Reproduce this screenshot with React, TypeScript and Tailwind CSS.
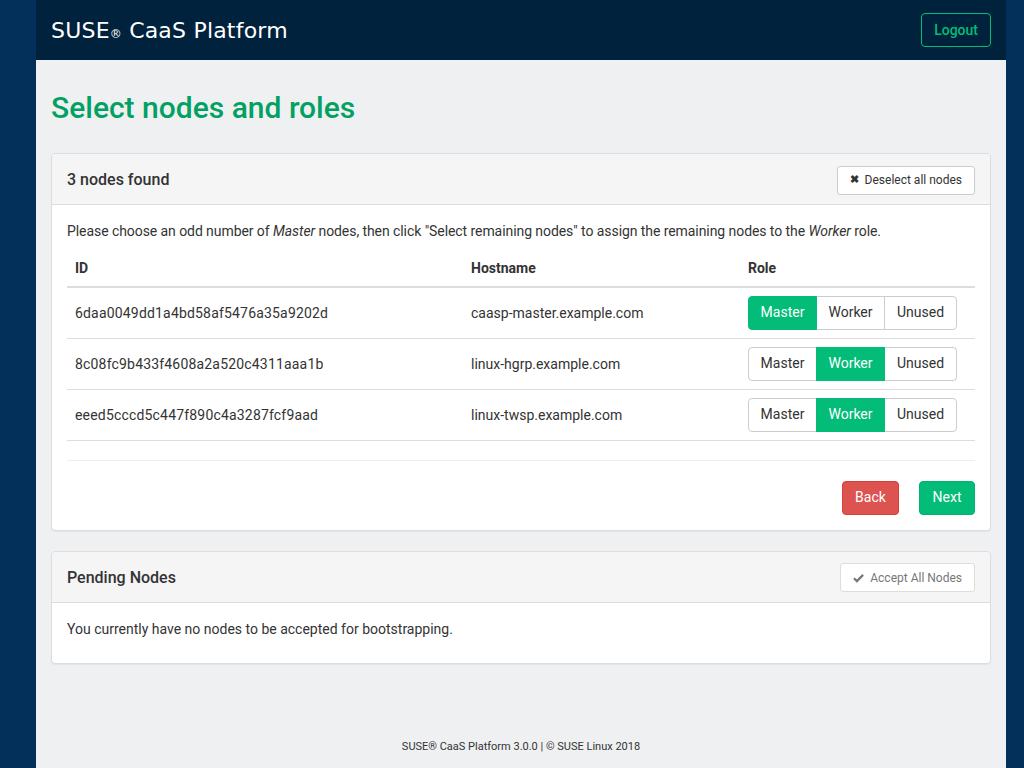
import React from "react";

const rows = [
  { id: "6daa0049dd1a4bd58af5476a35a9202d", host: "caasp-master.example.com", role: "Master" },
  { id: "8c08fc9b433f4608a2a520c4311aaa1b", host: "linux-hgrp.example.com", role: "Worker" },
  { id: "eeed5cccd5c447f890c4a3287fcf9aad", host: "linux-twsp.example.com", role: "Worker" },
];

function RoleGroup({ role }: { role: string }) {
  const opts = [
    { name: "Master", w: "w-[69px]" },
    { name: "Worker", w: "w-[69px]" },
    { name: "Unused", w: "w-[73px]" },
  ];
  return (
    <div className="flex h-[34px]">
      {opts.map((o, i) => {
        const active = o.name === role;
        const rounded = i === 0 ? "rounded-l-[4px]" : i === 2 ? "rounded-r-[4px]" : "";
        const border = i > 0 ? "-ml-px" : "";
        return (
          <div
            key={o.name}
            className={`${o.w} ${rounded} ${border} flex items-center justify-center border text-[14px] ${
              active
                ? "bg-[#02bc77] border-[#02bc77] text-white relative"
                : "bg-white border-[#ccc] text-[#333]"
            }`}
          >
            {o.name}
          </div>
        );
      })}
    </div>
  );
}

export default function App() {
  return (
    <div
      className="flex min-h-[768px] bg-[#02305a] text-[#333]"
      style={{ fontFamily: "Roboto, 'Liberation Sans', sans-serif" }}
    >
      <div className="w-[36px] shrink-0" />
      <div className="w-[970px] shrink-0 flex flex-col bg-[#eff0f2] min-h-[768px]">
        <header className="h-[60px] bg-[#00223d] flex items-center justify-between pl-[15px] pr-[15px]">
          <div
            className="text-white text-[22px] tracking-[0.2px]"
            style={{ fontFamily: "'DejaVu Sans', 'Open Sans', sans-serif" }}
          >
            SUSE<span className="text-[12px]">®</span> CaaS Platform
          </div>
          <div className="h-[34px] px-[12px] flex items-center border border-[#02bc77] rounded-[4px] text-[#02bc77] text-[14px] font-medium">
            Logout
          </div>
        </header>

        <main className="px-[15px] flex-1 flex flex-col">
          <h1 className="text-[30px] font-medium text-[#02a162] mt-[30px] mb-[27px] leading-[36px]">
            Select nodes and roles
          </h1>

          <section className="bg-white border border-[#ddd] rounded-[4px] shadow-[0_1px_1px_rgba(0,0,0,0.05)]">
            <div className="h-[51px] bg-[#f5f5f5] border-b border-[#ddd] rounded-t-[4px] flex items-center justify-between px-[15px] pt-[2px]">
              <div className="text-[16px] font-medium text-[#333]">3 nodes found</div>
              <div className="h-[29px] px-[12px] flex items-center gap-[6px] bg-white border border-[#ccc] rounded-[3px] text-[12px] text-[#333]">
                <span className="text-[11px] font-bold">✖</span>
                Deselect all nodes
              </div>
            </div>
            <div className="px-[15px] pt-[16px] pb-[15px]">
              <p className="text-[14px] leading-[20px] tracking-[-0.07px]">
                Please choose an odd number of <em>Master</em> nodes, then click "Select remaining nodes" to assign the remaining nodes to the <em>Worker</em> role.
              </p>
              <table className="w-full mt-[8px] text-[14px] border-collapse table-fixed">
                <colgroup>
                  <col className="w-[396px]" />
                  <col className="w-[277px]" />
                  <col />
                </colgroup>
                <thead>
                  <tr className="border-b-2 border-[#ddd] h-[38px]">
                    <th className="text-left font-bold px-[8px] pt-[2px] align-middle">ID</th>
                    <th className="text-left font-bold px-[8px] pt-[2px]">Hostname</th>
                    <th className="text-left font-bold px-[8px] pt-[2px]">Role</th>
                  </tr>
                </thead>
                <tbody>
                  {rows.map((r) => (
                    <tr key={r.id} className="border-b border-[#ddd] h-[51px]">
                      <td className="px-[8px] pt-[2px] tracking-[0.18px]">{r.id}</td>
                      <td className="px-[8px] pt-[2px]">{r.host}</td>
                      <td className="px-[8px]">
                        <RoleGroup role={r.role} />
                      </td>
                    </tr>
                  ))}
                </tbody>
              </table>
              <div className="mt-[19px] border-t border-[#eee] pt-[20px] flex justify-end gap-[20px]">
                <div className="h-[34px] w-[57px] flex items-center justify-center bg-[#dc5350] border border-[#d43f3a] rounded-[4px] text-white text-[14px]">
                  Back
                </div>
                <div className="h-[34px] w-[56px] flex items-center justify-center bg-[#02bc77] border border-[#02b06f] rounded-[4px] text-white text-[14px]">
                  Next
                </div>
              </div>
            </div>
          </section>

          <section className="mt-[20px] bg-white border border-[#ddd] rounded-[4px] shadow-[0_1px_1px_rgba(0,0,0,0.05)]">
            <div className="h-[51px] bg-[#f5f5f5] border-b border-[#ddd] rounded-t-[4px] flex items-center justify-between px-[15px] pt-[2px]">
              <div className="text-[16px] font-medium text-[#333]">Pending Nodes</div>
              <div className="h-[29px] px-[12px] flex items-center gap-[6px] bg-white border border-[#ddd] rounded-[3px] text-[12px] text-[#777]">
                <svg width="11" height="10" viewBox="0 0 12 10">
                  <path d="M1 5.2 L4.3 8.4 L11 1.6" stroke="#777" strokeWidth="2.4" fill="none" />
                </svg>
                Accept All Nodes
              </div>
            </div>
            <div className="px-[15px] pt-[16px] pb-[24px] text-[14px] leading-[20px]">
              You currently have no nodes to be accepted for bootstrapping.
            </div>
          </section>

          <footer className="mt-auto pb-[13px] text-center text-[11px] text-[#333]">
            SUSE® CaaS Platform 3.0.0 | © SUSE Linux 2018
          </footer>
        </main>
      </div>
      <div className="flex-1" />
    </div>
  );
}
